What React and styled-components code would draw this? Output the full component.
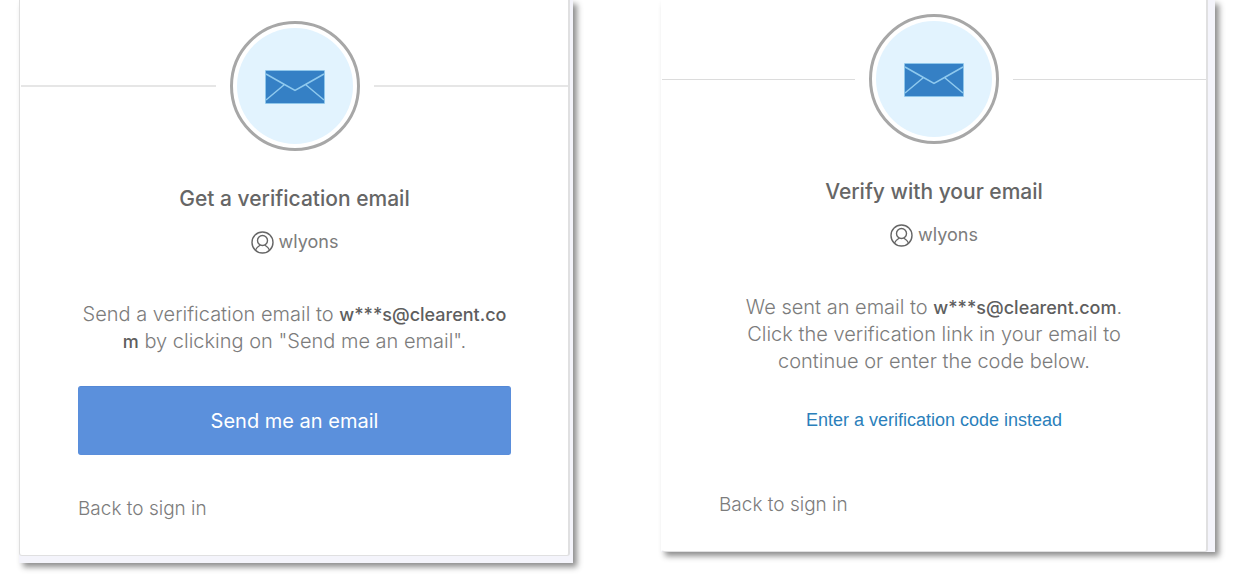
import React from "react";
import styled, { createGlobalStyle } from "styled-components";

const GlobalStyle = createGlobalStyle`
  *, *::before, *::after { box-sizing: border-box; }
  body {
    margin: 0;
    background: #fff;
    color: #7c7c7c;
    font-family: Inter, "Open Sans", sans-serif;
    font-size: 18px;
  }
`;

const Page = styled.main`
  display: grid;
  grid-template-columns: 1fr 1fr;
  align-items: start;
  gap: 88px;
  padding: 0 21px 16px 19px;
`;

const Frame = styled.section`
  background: #f4f4fb;
  padding: ${({ $inset }) => $inset};
  box-shadow: 4px 4px 6px rgba(0, 0, 0, 0.45);
`;

const Card = styled.div`
  background: #fff;
  border: solid #e0e0e1;
  border-width: 0 2px 1px 1px;
  border-left-color: ${({ $edge }) => $edge};
  border-radius: 0 0 3px 3px;
  padding: ${({ $pad }) => $pad};
`;

const BadgeRow = styled.div`
  display: flex;
  align-items: center;
  gap: 14px;
  &::before, &::after {
    content: "";
    flex: 1;
    height: ${({ $rule }) => $rule}px;
    background: ${({ $rule }) => ($rule > 1 ? "#e6e6e6" : "#dcdcdc")};
  }
`;

const Badge = styled.div`
  width: 130px;
  height: 130px;
  border: 3px solid #a7a7a7;
  border-radius: 50%;
  padding: 4px;
`;

const BadgeFill = styled.div`
  display: grid;
  place-items: center;
  height: 100%;
  padding-top: 2px;
  border-radius: 50%;
  background: #e2f3fe;
`;

const Content = styled.div`
  display: flex;
  flex-direction: column;
  padding: 36px 57px 0;
`;

const Title = styled.h1`
  margin: 0;
  color: #666;
  font-size: 21px;
  font-weight: 500;
  line-height: 24px;
  text-align: center;
`;

const User = styled.div`
  display: flex;
  justify-content: center;
  align-items: center;
  gap: 5px;
  margin-top: 19px;
  line-height: 24px;
`;

const Message = styled.p`
  margin: 47px 0 0;
  padding: 0 ${({ $indent }) => $indent}px;
  font-size: 20px;
  font-weight: 300;
  line-height: 27px;
  text-align: center;
  overflow-wrap: anywhere;
`;

const Address = styled.strong`
  color: #5e5e5e;
  font-size: 18px;
  font-weight: 500;
  line-height: 20px;
  word-break: ${({ $breakable }) => ($breakable ? "break-all" : "normal")};
`;

const PrimaryButton = styled.button`
  height: 69px;
  margin-top: 31px;
  border: 1px solid #5a8edb;
  border-top-color: #5488d6;
  border-radius: 3px;
  background: #5b90dc;
  color: #fff;
  font: 400 20px Inter, "Open Sans", sans-serif;
`;

const CodeLink = styled.a`
  align-self: center;
  margin-top: 33px;
  color: #2b7fbb;
  font: 18px/24px "Liberation Sans", Arial, sans-serif;
  text-decoration: none;
`;

const BackLink = styled.a`
  align-self: flex-start;
  margin: ${({ $top }) => $top}px 0 34px;
  color: #7c7c7c;
  font-size: 19px;
  font-weight: 300;
  line-height: 24px;
  text-decoration: none;
`;

const Envelope = () => (
  <svg width="62" height="36" viewBox="0 0 62 36" aria-hidden="true">
    <rect x="1" y="1" width="60" height="34" rx="1" fill="#8fc6ea" />
    <rect x="2" y="2" width="58" height="32" fill="#3580c5" />
    <path d="M2 5 L20.500 15.500 L31 21.500 L41.500 15.500 L60 5 M2 31 L20.500 15.500 M41.500 15.500 L60 31" fill="none" stroke="#8fc9ee" strokeWidth="1.500" />
  </svg>
);

const PersonIcon = () => (
  <svg width="23" height="23" viewBox="0 0 23 23" fill="none" stroke="#666" strokeWidth="1.400" aria-hidden="true">
    <circle cx="11.500" cy="11.500" r="10.500" />
    <circle cx="11.500" cy="9.500" r="5" />
    <path d="M4.500 19 C5.500 16.500 7 15.500 9.300 14 M18.500 19 C17.500 16.500 16 15.500 13.700 14" />
  </svg>
);

const Panel = ({ inset, edge, pad, rule, title, children }) => (
  <Frame $inset={inset}>
    <Card $pad={pad} $edge={edge}>
      <BadgeRow $rule={rule}>
        <Badge><BadgeFill><Envelope /></BadgeFill></Badge>
      </BadgeRow>
      <Content>
        <Title>{title}</Title>
        <User><PersonIcon /><span>wlyons</span></User>
        {children}
      </Content>
    </Card>
  </Frame>
);

export default function App() {
  return (
    <>
      <GlobalStyle />
      <Page>
        <Panel inset="0 3px 7px 0" edge="#dedede" pad="21px 0 0 1px" rule={2} title="Get a verification email">
          <Message $indent={0}>
            Send a verification email to <Address>w***s@clearent.co<wbr />m</Address> by clicking on "Send me an email".
          </Message>
          <PrimaryButton type="button">Send me an email</PrimaryButton>
          <BackLink href="#signin" $top={42}>Back to sign in</BackLink>
        </Panel>
        <Panel inset="0 7px 0 0" edge="#fff" pad="14px 0 0" rule={1} title="Verify with your email">
          <Message $indent={16}>
            We sent an email to <Address>w***s@clearent.com</Address>. Click the verification link in your email to continue or enter the code below.
          </Message>
          <CodeLink href="#code">Enter a verification code instead</CodeLink>
          <BackLink href="#signin" $top={61}>Back to sign in</BackLink>
        </Panel>
      </Page>
    </>
  );
}
